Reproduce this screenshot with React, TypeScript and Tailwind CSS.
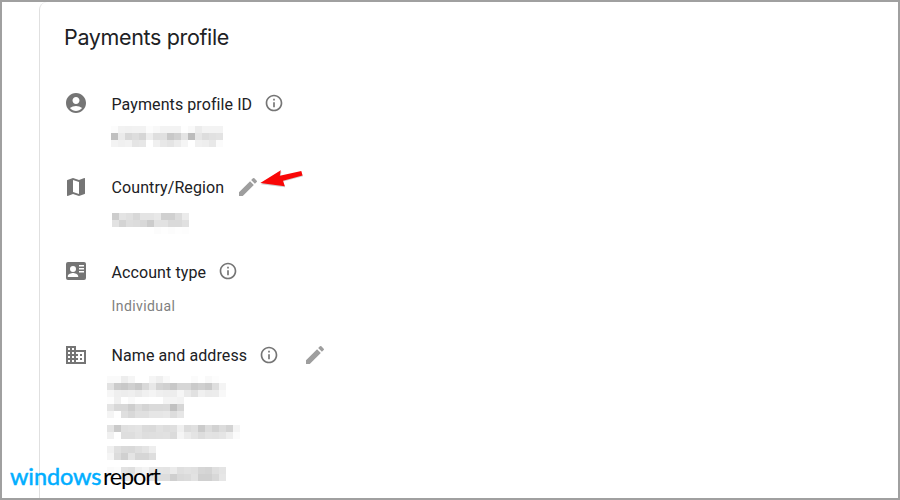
import { MdAccountCircle, MdMap, MdDomain, MdEdit, MdInfoOutline } from 'react-icons/md'
import type { ReactNode } from 'react'

// One string per row of 7px cells, two hex digits of grey per cell, '..' is empty
const PROFILE_ID = [
  'fcf2f1f2f2fcf8f3f3f3fef9ecf3f3f3',
  'c0ebd8ddd6eedfe0c8d0e4bce6dde1e3',
  'f3f0f2e5e7..f0e8e4ecf5..f0eee8fb',
]

const COUNTRY = [
  'cde4e0d8e4e4e8d0d0dceb',
  'e2d4dedcd8cce2e2dadae0',
  '............fcfefcfefd',
]

const ADDRESS = [
  'fafaedf5....f5eff9......fb..f9fd',
  'e2ccc8d0c8d9e8d4d0c8d6d6cad0cadef4',
  'f6efedefeaf0f4efededf6eae1f0ebecf8',
  'fdf0..f9fefe....f4f4f2',
  'e4d8d8cedbd4dadadbc1d6',
  'f4fedfd8e0e0e6e6e8dde6',
  '',
  'e3cae0e2e4dbdae1dddff0dce0cbdcd2dcd3f4',
  'f0fededee3dedfe0e1dbf5ebe4dde3e2e5eefb',
  '',
  'f0e0dad9dfe4ee',
  'f5dcd0e4d6d6de',
  '',
  'fafce2dfeff4e8e5e4ebdfe2e0d6d4dfe4',
  'fcfce6e8f6f4e2ddddcfd9dbe2d0d0d8e6',
]

function Mosaic({ rows }: { rows: string[] }) {
  return (
    <div className="flex flex-col">
      {rows.map((row, y) => (
        <div key={y} className="flex h-[7px]">
          {(row.match(/../g) ?? []).map((cell, x) => (
            <span
              key={x}
              className="h-[7px] w-[7px]"
              style={{ backgroundColor: cell === '..' ? 'transparent' : `#${cell}${cell}${cell}` }}
            />
          ))}
        </div>
      ))}
    </div>
  )
}

function AccountCardIcon() {
  return (
    <svg width="24" height="24" viewBox="0 0 24 24" fill="currentColor">
      <path
        fillRule="evenodd"
        d="M4 3h16a2 2 0 0 1 2 2v14a2 2 0 0 1-2 2H4a2 2 0 0 1-2-2V5a2 2 0 0 1 2-2zm11 3v1.6h5V6zm0 3v1.6h5V9zm0 3v1.6h5V12zM9 7a3 3 0 1 0 0 6 3 3 0 0 0 0-6zM3.8 18h10.4v-.9c0-2-3.5-3.1-5.2-3.1s-5.2 1.1-5.2 3.1z"
      />
    </svg>
  )
}

function Arrow() {
  return (
    <svg className="absolute left-[147px] -top-[4px]" width="46" height="22" viewBox="259 168 46 22">
      <path
        d="M261 184.2 281.5 171.5 280.3 177.3 301.5 172.2 303 176.3 283.2 181.5 285.2 187.2z"
        fill="#9a9a9a"
        opacity="0.5"
      />
      <path d="M260.3 183 280.8 170.3 279.8 175.8 301.3 171 302.5 175.4 283 180.8 284.8 186.2z" fill="#f90707" />
    </svg>
  )
}

interface RowProps {
  icon: ReactNode
  label: string
  labelClass?: string
  actions: ReactNode
  children: ReactNode
}

function Row({ icon, label, labelClass = 'mt-px', actions, children }: RowProps) {
  return (
    <div className="flex h-[84px] gap-6">
      <div className="flex h-[30px] w-6 items-center text-[#757575]">{icon}</div>
      <div className="relative -ml-[0.5px] flex flex-col items-start">
        <div className="flex h-8 shrink-0 items-center">
          <span className={`whitespace-nowrap text-base tracking-[0.09px] text-[#202124] ${labelClass}`}>{label}</span>
          <div className="-mt-[2px] flex items-center gap-6 pl-3 text-[#757575]">{actions}</div>
        </div>
        {children}
      </div>
    </div>
  )
}

export default function App() {
  return (
    <div className="relative flex h-[500px] w-[900px] overflow-hidden border-2 border-[#a0a0a0] bg-white pl-[37px] font-['Roboto',sans-serif]">
      <main className="flex-1 rounded-tl-lg border-l border-[#e0e0e0] pl-6">
        <h1 className="mt-[19px] h-8 whitespace-nowrap font-['Inter',sans-serif] text-[21.5px] leading-8 tracking-[-0.35px] text-[#202124]">
          Payments profile
        </h1>

        <div className="pt-[35px]">
          <Row icon={<MdAccountCircle size={24} />} label="Payments profile ID" actions={<MdInfoOutline size={20} />}>
            <div className="-ml-[0.5px] mt-[6px]">
              <Mosaic rows={PROFILE_ID} />
            </div>
          </Row>

          <Row
            icon={<MdMap size={24} />}
            label="Country/Region"
            labelClass="-mt-px"
            actions={<MdEdit size={24} className="text-[#9e9e9e]" />}
          >
            <Arrow />
            <div className="ml-[0.5px] mt-[9px]">
              <Mosaic rows={COUNTRY} />
            </div>
          </Row>

          <Row icon={<AccountCardIcon />} label="Account type" actions={<MdInfoOutline size={20} />}>
            <p className="mt-2 text-sm leading-5 tracking-[0.42px] text-[#808080]">Individual</p>
          </Row>

          <Row
            icon={<MdDomain size={24} />}
            label="Name and address"
            labelClass="-mt-px"
            actions={
              <>
                <MdInfoOutline size={20} />
                <MdEdit size={24} className="text-[#9e9e9e]" />
              </>
            }
          >
            <div className="-ml-[4.5px] mt-1">
              <Mosaic rows={ADDRESS} />
            </div>
          </Row>
        </div>
      </main>

      {/* Watermark */}
      <div className="absolute bottom-[8px] left-2 flex h-7 items-center whitespace-nowrap font-['Lato',sans-serif] text-[23.5px] leading-7">
        <span className="w-[93px] tracking-[-0.1px] text-[#00aeff] [-webkit-text-stroke:0.5px_#00aeff]">windows</span>
        <span className="tracking-[-1.2px] text-black">report</span>
      </div>
    </div>
  )
}
